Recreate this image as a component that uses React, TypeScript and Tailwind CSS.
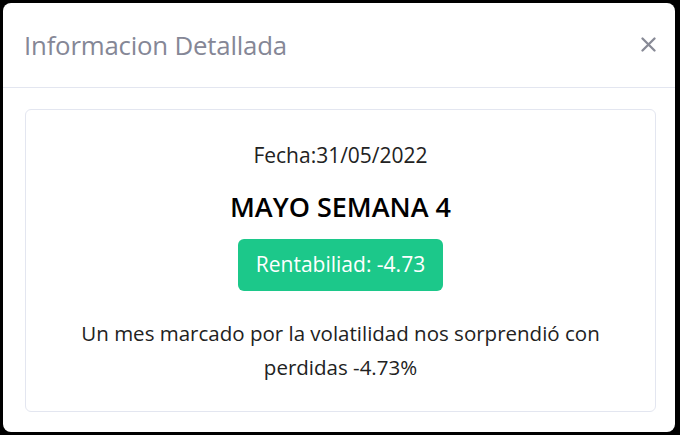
import React from 'react';

const App: React.FC = () => {
  return (
    <div className="w-[680px] h-[435px] bg-black pt-[3px] pl-[3px] pr-[5px] pb-[3px]" style={{ fontFamily: '"Open Sans", Lato, sans-serif' }}>
      <div className="h-full bg-white rounded-lg flex flex-col">
        {/* Header */}
        <div className="h-[85px] flex items-center justify-between pl-[21px] pr-[19px] border-b border-[#e3e6f0]">
          <h5 className="text-[25.8px] text-[#858796] font-normal tracking-[-0.2px]">Informacion Detallada</h5>
          <button className="w-[15px] h-[15px] mb-[2px]">
            <svg viewBox="0 0 15 15" className="w-[15px] h-[15px]">
              <path d="M1.5 1.5 L13.5 13.5 M13.5 1.5 L1.5 13.5" stroke="#888a96" strokeWidth="2.3" strokeLinecap="round" fill="none" />
            </svg>
          </button>
        </div>

        {/* Body */}
        <div className="flex-1 pl-[22px] pr-[19px] pt-[21px] pb-[20px]">
          <div className="h-full border border-[#e3e6f0] rounded-md flex flex-col items-center text-center pt-[30px]">
            <p className="text-[21px] text-[#222] leading-[30px]">Fecha:31/05/2022</p>
            <h3 className="mt-[22px] text-[27px] font-semibold text-black leading-[30px]">MAYO SEMANA 4</h3>
            <span className="mt-[17px] h-[52px] px-[18px] flex items-center rounded-md bg-[#1cc88a] text-white text-[21px]">
              Rentabiliad: -4.73
            </span>
            <p className="mt-[25px] text-[20.5px] text-[#222] leading-[34px] px-[40px]">
              Un mes marcado por la volatilidad nos sorprendió con perdidas -4.73%
            </p>
          </div>
        </div>
      </div>
    </div>
  );
};

export default App;
